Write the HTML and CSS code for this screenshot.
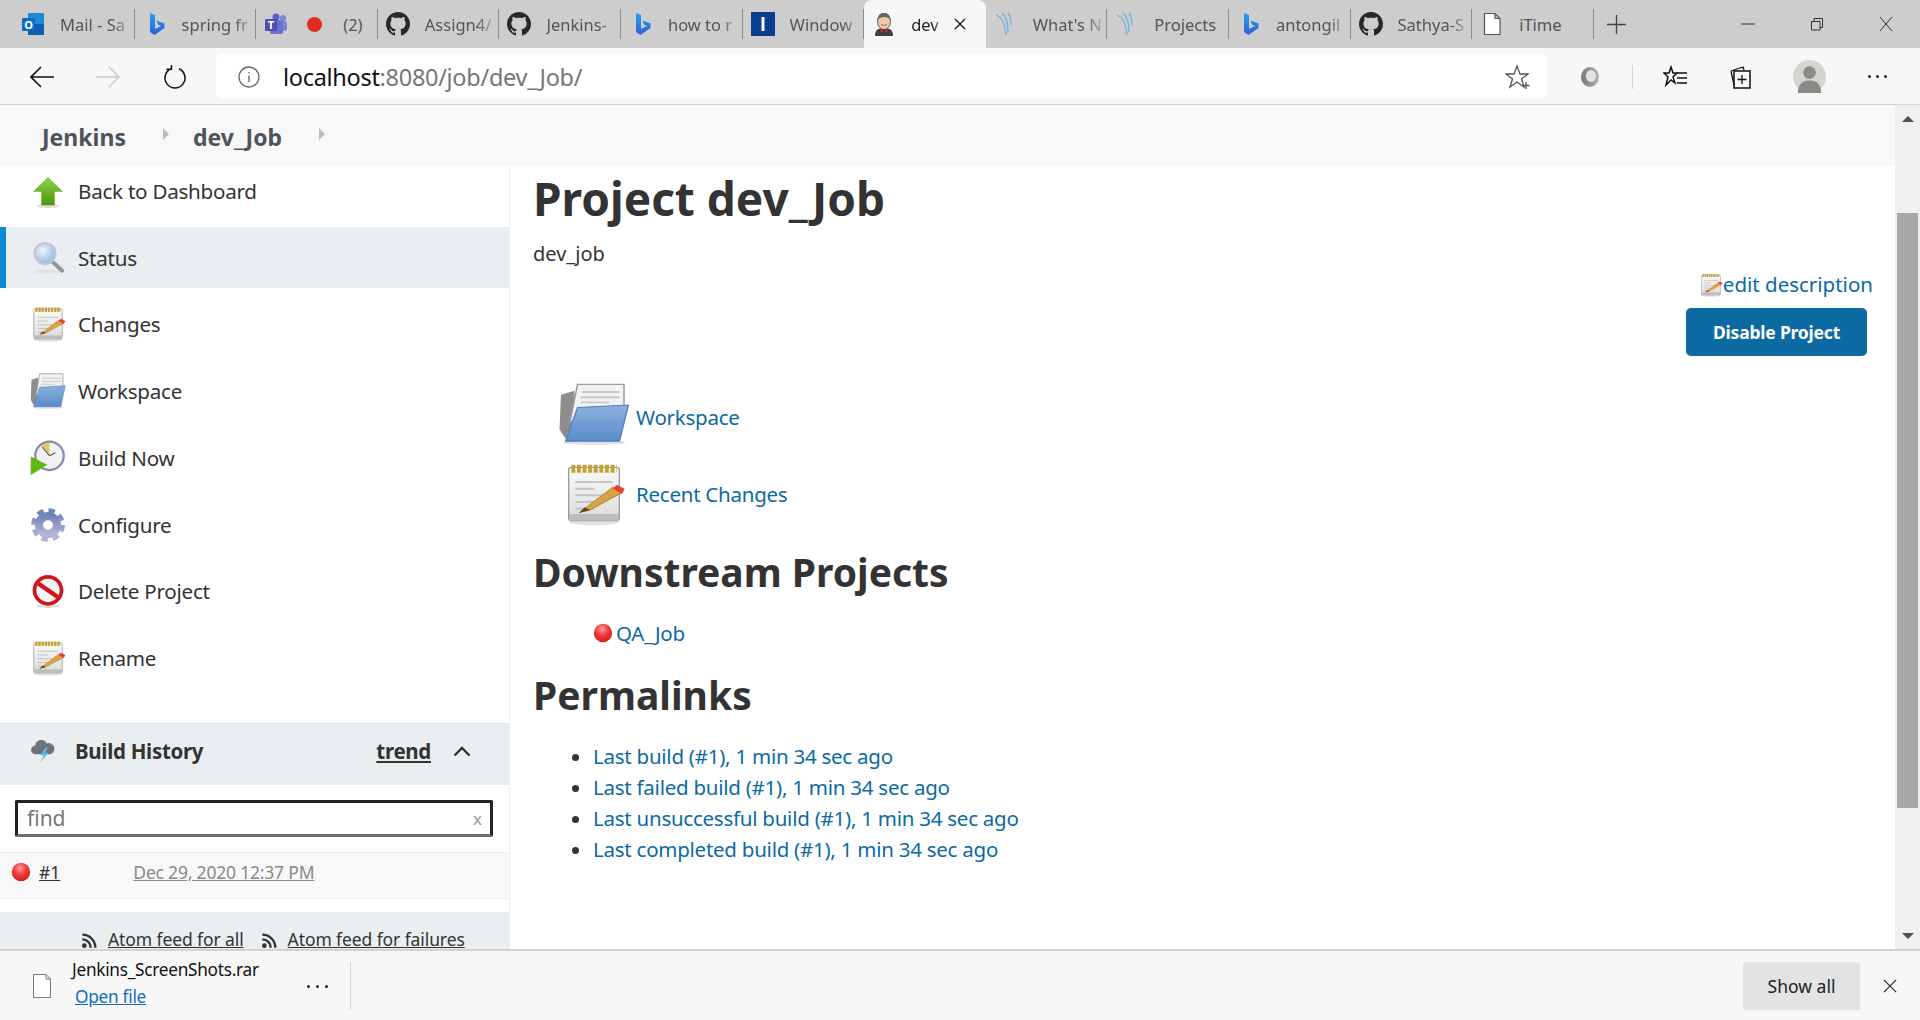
FILE: index.html
```html
<!doctype html>
<html>
<head>
<meta charset="utf-8">
<title>dev_Job [Jenkins]</title>
<link rel="stylesheet" href="styles.css">
</head>
<body>
<svg class="defs" width="0" height="0">
	<defs>
		<linearGradient id="g-green" x1="0" y1="0" x2="0" y2="1"><stop offset="0" stop-color="#8ed04a"/><stop offset="1" stop-color="#4e9a06"/></linearGradient>
		<linearGradient id="g-paper" x1="0" y1="0" x2="0" y2="1"><stop offset="0" stop-color="#fafafa"/><stop offset="1" stop-color="#dcdcdc"/></linearGradient>
		<linearGradient id="g-blue" x1="0" y1="0" x2="0" y2="1"><stop offset="0" stop-color="#8cb0de"/><stop offset="1" stop-color="#5a8ccb"/></linearGradient>
		<linearGradient id="g-gear" x1="0" y1="0" x2="0" y2="1"><stop offset="0" stop-color="#6f86b8"/><stop offset="1" stop-color="#b5b5d8"/></linearGradient>
		<linearGradient id="g-bing" x1="0" y1="0" x2="0" y2="1"><stop offset="0" stop-color="#2aa0f0"/><stop offset="1" stop-color="#2a5fd8"/></linearGradient>
		<linearGradient id="g-ring" x1="0" y1="0" x2="1" y2="0"><stop offset="0" stop-color="#777"/><stop offset="1" stop-color="#b5b5b5"/></linearGradient>
		<radialGradient id="g-lens" cx="0.4" cy="0.35" r="0.7"><stop offset="0" stop-color="#eef5ff"/><stop offset="1" stop-color="#8fb4e6"/></radialGradient>
		<radialGradient id="g-ball" cx="0.45" cy="0.3" r="0.7"><stop offset="0" stop-color="#ff9d9d"/><stop offset="0.5" stop-color="#f03a3a"/><stop offset="1" stop-color="#d81c1c"/></radialGradient>
		<symbol id="i-up" viewBox="0 0 48 48">
			<ellipse cx="24" cy="44" rx="16" ry="2.5" fill="#ddd"/>
			<polygon points="24,5 44,25 33,25 33,43 15,43 15,25 4,25" fill="url(#g-green)"/>
		</symbol>
		<symbol id="i-search" viewBox="0 0 48 48">
			<ellipse cx="22" cy="42" rx="18" ry="3" fill="#e3e3e3"/>
			<line x1="30" y1="29" x2="43" y2="41" stroke="#8f959c" stroke-width="5" stroke-linecap="round"/>
			<circle cx="20" cy="18" r="14" fill="url(#g-lens)" stroke="#c3c6cc" stroke-width="3"/>
		</symbol>
		<symbol id="i-notepad" viewBox="0 0 48 48">
			<ellipse cx="24" cy="45" rx="19" ry="2.5" fill="#e2e2e2"/>
			<rect x="5" y="4" width="38" height="40" rx="2" fill="url(#g-paper)" stroke="#9a9a9a"/>
			<rect x="5.500" y="39" width="37" height="5" fill="#bdbdbd"/>
			<line x1="7" y1="5" x2="41" y2="5" stroke="#c2a336" stroke-width="6" stroke-dasharray="3 1.200"/>
			<path d="M10 15H38M10 20H24M10 25H34M10 30H28M10 35H24" stroke="#c4c4c4" stroke-width="1.500"/>
			<polygon points="38,19 45,23 21,36 13,38" fill="#dca24a" stroke="#a9741a" stroke-width=".6"/>
			<polygon points="41,17 47,20 45,24 38,20" fill="#e2433c"/>
			<polygon points="17,34 21,36 13,38" fill="#5b4320"/>
		</symbol>
		<symbol id="i-folder" viewBox="0 0 48 48" preserveAspectRatio="none">
			<ellipse cx="24" cy="46" rx="21" ry="2" fill="#e2e2e2"/>
			<polygon points="2,9 11,6 11,40 5,43 1,36" fill="#8d8d8d"/>
			<polygon points="13,1 44,1 44,26 8,30" fill="#f2f2f2" stroke="#9c9c9c"/>
			<path d="M16 7H41M15 11H41M15 15H34" stroke="#c8c8c8" stroke-width="1.500"/>
			<polygon points="13,19 47,17 41,45 5,45" fill="url(#g-blue)" stroke="#4f7fbc" stroke-width=".8"/>
		</symbol>
		<symbol id="i-clock" viewBox="0 0 48 48">
			<circle cx="26" cy="21" r="19" fill="#f1f1f4" stroke="#8a8aa6" stroke-width="3"/>
			<path d="M26 21L16 7A18 18 0 0 1 26 4Z" fill="#e6c766"/>
			<path d="M26 21L16 9M26 21L34 17" stroke="#555" stroke-width="1.500"/>
			<polygon points="1,22 23,33 1,47" fill="#62b80e"/>
		</symbol>
		<symbol id="i-gear" viewBox="0 0 48 48">
			<circle cx="24" cy="24" r="18" fill="none" stroke="url(#g-gear)" stroke-width="9" stroke-dasharray="8 6.140"/>
			<circle cx="24" cy="24" r="12" fill="none" stroke="url(#g-gear)" stroke-width="11"/>
		</symbol>
		<symbol id="i-no" viewBox="0 0 48 48">
			<ellipse cx="24" cy="44" rx="16" ry="2.500" fill="#ddd"/>
			<circle cx="24" cy="23" r="18" fill="#f6f6f6" stroke="#d0161c" stroke-width="5"/>
			<line x1="11" y1="14" x2="37" y2="32" stroke="#d0161c" stroke-width="6"/>
		</symbol>
		<symbol id="i-storm" viewBox="0 0 48 48">
			<path d="M10 30a8 8 0 0 1 0-16 11 11 0 0 1 21-4 9 9 0 0 1 7 20z" fill="#6f7478"/>
			<polygon points="28,18 20,32 26,32 18,46 34,27 27,27 33,18" fill="#5cb8ee"/>
		</symbol>
		<symbol id="i-ball" viewBox="0 0 24 24">
			<circle cx="12" cy="12" r="11" fill="url(#g-ball)"/>
		</symbol>
		<symbol id="i-rss" viewBox="0 0 24 24">
			<circle cx="5" cy="19" r="3.500" fill="#333"/>
			<path d="M2 9.500A12.500 12.500 0 0 1 14.500 22M2 2.500A19.500 19.500 0 0 1 21.500 22" fill="none" stroke="#333" stroke-width="3.600"/>
		</symbol>
		<symbol id="i-github" viewBox="0 0 16 16">
			<path fill="#24292e" d="M8 0C3.58 0 0 3.58 0 8c0 3.54 2.29 6.53 5.47 7.59.4.07.55-.17.55-.38 0-.19-.01-.82-.01-1.49-2.01.37-2.53-.49-2.69-.94-.09-.23-.48-.94-.82-1.13-.28-.15-.68-.52-.01-.53.63-.01 1.08.58 1.23.82.72 1.21 1.87.87 2.33.66.07-.52.28-.87.51-1.07-1.78-.2-3.64-.89-3.64-3.95 0-.87.31-1.59.82-2.15-.08-.2-.36-1.02.08-2.12 0 0 .67-.21 2.2.82.64-.18 1.32-.27 2-.27.68 0 1.36.09 2 .27 1.53-1.04 2.2-.82 2.2-.82.44 1.1.16 1.92.08 2.12.51.56.82 1.27.82 2.15 0 3.07-1.87 3.75-3.65 3.95.29.25.54.73.54 1.48 0 1.07-.01 1.93-.01 2.2 0 .21.15.46.55.38A8.013 8.013 0 0016 8c0-4.42-3.58-8-8-8z"/>
		</symbol>
		<symbol id="i-bing" viewBox="0 0 24 24">
			<path d="M7 1l5 2v14l6-3-3-1.500-1.500-4 8 3V16l-10 7-4.500-3z" fill="url(#g-bing)"/>
		</symbol>
		<symbol id="i-swirl" viewBox="0 0 24 24">
			<path d="M2 3c6 2 9 9 10 20M8 1c4 3 6 10 6 19M14 1c2 3 3 6 3 12" fill="none" stroke="#6bb3e0" stroke-width="1.300"/>
		</symbol>
		<symbol id="i-page" viewBox="0 0 24 24">
			<path d="M4.500 1.500H15l5 5v16H4.500zM15 1.500v5h5" fill="#fff" stroke="#555" stroke-width="1.200"/>
		</symbol>
		<symbol id="i-jenkins" viewBox="0 0 24 24">
			<path d="M3 24c0-6 3-8 9-8s9 2 9 8z" fill="#3d3d4a"/>
			<path d="M8.500 17l3.500 2 3.500-2v4l-3.500-2-3.500 2z" fill="#c22"/>
			<ellipse cx="12" cy="9.500" rx="6.500" ry="8" fill="#eec9a8" stroke="#444" stroke-width=".8"/>
			<path d="M5.500 8C6 2 9 1 12 1s6 1 6.500 7C16 4 9 4 5.500 8z" fill="#6b6560"/>
			<path d="M9 12.500q3 2 6 0" fill="none" stroke="#844" stroke-width=".8"/>
		</symbol>
	</defs>
</svg>

<div class="tabstrip">
	<div class="tab">
		<svg class="tab-ico" viewBox="0 0 24 24"><rect x="7" y="1" width="16" height="22" rx="1" fill="#1b8ad8"/><rect x="7" y="12" width="16" height="11" fill="#0d5eb0"/><rect x="1" y="6" width="13" height="13" rx="1" fill="#0f6cc4"/><text x="7.500" y="16.500" class="ico-letter">O</text></svg>
		<span class="tab-title">Mail - Sa</span>
	</div>
	<div class="tab">
		<svg class="tab-ico"><use href="#i-bing"/></svg>
		<span class="tab-title">spring fr</span>
	</div>
	<div class="tab tab-teams">
		<svg class="tab-ico" viewBox="0 0 24 24"><circle cx="19" cy="6" r="3" fill="#7b83d4"/><circle cx="12" cy="5" r="3.500" fill="#5b60c4"/><rect x="14" y="9" width="9" height="10" rx="3" fill="#7b83d4"/><rect x="6" y="8" width="13" height="14" rx="2" fill="#6b70cc"/><rect x="1" y="7" width="12" height="12" rx="1" fill="#4b50b0"/><text x="7" y="16.500" class="ico-letter">T</text></svg>
		<span class="rec-dot"></span>
		<span class="tab-title tab-title-full">(2)</span>
	</div>
	<div class="tab">
		<svg class="tab-ico"><use href="#i-github"/></svg>
		<span class="tab-title">Assign4/</span>
	</div>
	<div class="tab">
		<svg class="tab-ico"><use href="#i-github"/></svg>
		<span class="tab-title">Jenkins-</span>
	</div>
	<div class="tab">
		<svg class="tab-ico"><use href="#i-bing"/></svg>
		<span class="tab-title">how to r</span>
	</div>
	<div class="tab">
		<svg class="tab-ico" viewBox="0 0 24 24"><rect width="24" height="24" fill="#0b3d91"/><rect x="10.500" y="5" width="3" height="14" fill="#fff"/></svg>
		<span class="tab-title">Window</span>
	</div>
	<div class="tab tab-active">
		<svg class="tab-ico"><use href="#i-jenkins"/></svg>
		<span class="tab-title">dev</span>
		<svg class="tab-close" viewBox="0 0 12 12"><path d="M1 1L11 11M11 1L1 11" stroke="#111" stroke-width="1.300"/></svg>
	</div>
	<div class="tab">
		<svg class="tab-ico"><use href="#i-swirl"/></svg>
		<span class="tab-title">What's N</span>
	</div>
	<div class="tab">
		<svg class="tab-ico"><use href="#i-swirl"/></svg>
		<span class="tab-title tab-title-full">Projects</span>
	</div>
	<div class="tab">
		<svg class="tab-ico"><use href="#i-bing"/></svg>
		<span class="tab-title">antongil</span>
	</div>
	<div class="tab">
		<svg class="tab-ico"><use href="#i-github"/></svg>
		<span class="tab-title">Sathya-S</span>
	</div>
	<div class="tab">
		<svg class="tab-ico"><use href="#i-page"/></svg>
		<span class="tab-title tab-title-full">iTime</span>
	</div>
	<svg class="new-tab" viewBox="0 0 20 20"><path d="M10 0V20M0 10H20" stroke="#444" stroke-width="1.400"/></svg>
	<div class="win-btns">
		<svg viewBox="0 0 14 14"><path d="M0 7H14" stroke="#333"/></svg>
		<svg viewBox="0 0 14 14"><path d="M1.500 4.500H10V13H1.500zM4 4.500V1.500H12.500V10.500H10" fill="none" stroke="#333"/></svg>
		<svg viewBox="0 0 14 14"><path d="M1 0L13 14M13 0L1 14" stroke="#333"/></svg>
	</div>
</div>

<div class="toolbar">
	<svg class="tb-ico tb-back" viewBox="0 0 24 24"><path d="M24 12H1M11 2L1 12L11 22" fill="none" stroke="#111" stroke-width="1.600"/></svg>
	<svg class="tb-ico tb-fwd" viewBox="0 0 24 24"><path d="M0 12H23M13 2L23 12L13 22" fill="none" stroke="#ccc" stroke-width="1.600"/></svg>
	<svg class="tb-ico tb-reload" viewBox="0 0 24 24"><path d="M8 3.800A10 10 0 1 0 16 3.800M8.500 0V4.300H3.500" fill="none" stroke="#111" stroke-width="1.500"/></svg>
	<div class="addr">
		<svg class="addr-info" viewBox="0 0 22 22"><circle cx="11" cy="11" r="10" fill="none" stroke="#666" stroke-width="1.300"/><path d="M11 9.500V16M11 6V7.500" stroke="#666" stroke-width="1.400"/></svg>
		<span class="addr-url"><b>localhost</b>:8080/job/dev_Job/</span>
		<svg class="addr-star" viewBox="0 0 26 26"><path d="M12 2l3 8h8l-6.500 5 2.500 8-7-5-7 5 2.500-8L1 10h8z" fill="none" stroke="#555" stroke-width="1.300"/><path d="M21 18V25M17.500 21.500H24.500" stroke="#555" stroke-width="1.300"/></svg>
	</div>
	<svg class="ext-ring" viewBox="0 0 20 22"><ellipse cx="10" cy="11" rx="9" ry="10" fill="url(#g-ring)"/><ellipse cx="11" cy="10" rx="5" ry="6" fill="#e4e4e4"/></svg>
	<span class="tb-sep"></span>
	<svg class="tb-ico tb-favs" viewBox="0 0 24 24"><path d="M8 2l2 6h4l-4 4 2 6-4-3-5 5 2-8-4-4h5z" fill="none" stroke="#111" stroke-width="1.500"/><path d="M14 8H24M14 13H24M14 18H24" stroke="#111" stroke-width="1.500"/></svg>
	<svg class="tb-ico tb-coll" viewBox="0 0 24 24"><path d="M3 6L15 2L16 5M3 6L6 20" fill="none" stroke="#111" stroke-width="1.300"/><rect x="6" y="6" width="16" height="17" fill="none" stroke="#111" stroke-width="1.500"/><path d="M14 10V19M9.500 14.500H18.500" stroke="#111" stroke-width="1.300"/></svg>
	<svg class="tb-avatar" viewBox="0 0 34 34"><circle cx="17" cy="17" r="17" fill="#d4d4d0"/><circle cx="17" cy="13" r="6.500" fill="#8a8a86"/><path d="M5 34c0-11 6-13 12-13s12 2 12 13z" fill="#8a8a86"/></svg>
	<div class="tb-more"><i></i><i></i><i></i></div>
</div>

<div class="viewport">
	<div class="page">
		<div class="breadcrumb">
			<span class="crumb">Jenkins</span>
			<span class="crumb-arrow"></span>
			<span class="crumb">dev_Job</span>
			<span class="crumb-arrow"></span>
		</div>
		<div class="content">
			<div class="side">
				<div class="task task-first"><svg class="task-ico"><use href="#i-up"/></svg>Back to Dashboard</div>
				<div class="task task-active"><svg class="task-ico"><use href="#i-search"/></svg>Status</div>
				<div class="task"><svg class="task-ico"><use href="#i-notepad"/></svg>Changes</div>
				<div class="task"><svg class="task-ico"><use href="#i-folder"/></svg>Workspace</div>
				<div class="task"><svg class="task-ico"><use href="#i-clock"/></svg>Build Now</div>
				<div class="task"><svg class="task-ico"><use href="#i-gear"/></svg>Configure</div>
				<div class="task"><svg class="task-ico"><use href="#i-no"/></svg>Delete Project</div>
				<div class="task"><svg class="task-ico"><use href="#i-notepad"/></svg>Rename</div>

				<div class="pane-head">
					<svg class="pane-ico"><use href="#i-storm"/></svg>
					<span class="pane-title">Build History</span>
					<span class="pane-trend">trend</span>
					<svg class="pane-chev" viewBox="0 0 18 11"><path d="M1.500 9.500L9 2L16.500 9.500" fill="none" stroke="#333" stroke-width="2.400"/></svg>
				</div>
				<div class="find-box">
					<span class="find-text">find</span>
					<span class="find-x">x</span>
				</div>
				<div class="build-row">
					<svg class="build-ball"><use href="#i-ball"/></svg>
					<a class="build-num">#1</a>
					<a class="build-date">Dec 29, 2020 12:37 PM</a>
				</div>
				<div class="feeds">
					<svg class="feed-ico"><use href="#i-rss"/></svg><a>Atom feed for all</a>
					<svg class="feed-ico feed-ico2"><use href="#i-rss"/></svg><a>Atom feed for failures</a>
				</div>
			</div>

			<div class="main">
				<h1>Project dev_Job</h1>
				<div class="desc">dev_job</div>
				<div class="edit-desc">
					<svg class="edit-ico"><use href="#i-notepad"/></svg><a>edit description</a>
				</div>
				<div class="disable-wrap"><button class="disable-btn">Disable Project</button></div>
				<div class="link-row link-row-first"><span class="link-ico"><svg class="ico-folder"><use href="#i-folder"/></svg></span><a>Workspace</a></div>
				<div class="link-row"><span class="link-ico"><svg class="ico-notes"><use href="#i-notepad"/></svg></span><a>Recent Changes</a></div>
				<h2>Downstream Projects</h2>
				<div class="downstream"><svg class="down-ball"><use href="#i-ball"/></svg><a>QA_Job</a></div>
				<h2 class="h2-perma">Permalinks</h2>
				<ul class="permalinks">
					<li><a>Last build (#1), 1 min 34 sec ago</a></li>
					<li><a>Last failed build (#1), 1 min 34 sec ago</a></li>
					<li><a>Last unsuccessful build (#1), 1 min 34 sec ago</a></li>
					<li><a>Last completed build (#1), 1 min 34 sec ago</a></li>
				</ul>
			</div>
		</div>
	</div>
	<div class="scrollbar">
		<span class="sb-up"></span>
		<span class="sb-thumb"></span>
		<span class="sb-down"></span>
	</div>
</div>

<div class="downloads">
	<svg class="dl-file" viewBox="0 0 18 24"><path d="M.5 .5H13L17.500 5V23.500H.5zM13 .5V5H17.500" fill="#fff" stroke="#777"/></svg>
	<div class="dl-info">
		<div class="dl-name">Jenkins_ScreenShots.rar</div>
		<a class="dl-open">Open file</a>
	</div>
	<div class="dl-more"><i></i><i></i><i></i></div>
	<span class="dl-sep"></span>
	<span class="dl-all">Show all</span>
	<svg class="dl-close" viewBox="0 0 16 16"><path d="M1 1L15 15M15 1L1 15" stroke="#222" stroke-width="1.300"/></svg>
</div>
</body>
</html>
```

FILE: styles.css
```css
*{
	box-sizing: border-box;
}
html,body{
	margin: 0;
	height: 100%;
}
body{
	display: flex;
	flex-direction: column;
	overflow: hidden;
	font-family: "Noto Sans", "Open Sans", sans-serif;
	color: #333;
	background: #fff;
}
a{
	color: #0b6aa2;
}
.defs{
	position: absolute;
}

/* tabs */
.tabstrip{
	height: 48px;
	flex: none;
	display: flex;
	align-items: stretch;
	padding-left: 13px;
	background: #cdcdcd;
}
.tab{
	width: 121.6px;
	flex: none;
	display: flex;
	align-items: center;
	padding-left: 8px;
	position: relative;
	font-size: 16.5px;
	color: #555;
	overflow: hidden;
}
.tab::after{
	content: "";
	position: absolute;
	right: 0;
	top: 9px;
	bottom: 9px;
	width: 1px;
	background: #8a8a8a;
}
.tab-ico{
	width: 24px;
	height: 24px;
	flex: none;
	margin-right: 15px;
}
.ico-letter{
	font-family: "Noto Sans", sans-serif;
	font-size: 11px;
	font-weight: 700;
	fill: #fff;
	text-anchor: middle;
}
.tab-title{
	flex: 1;
	min-width: 0;
	overflow: hidden;
	white-space: nowrap;
	-webkit-mask-image: linear-gradient(to right, #000 70%, transparent 100%);
	mask-image: linear-gradient(to right, #000 70%, transparent 100%);
}
.tab-title-full{
	-webkit-mask-image: none;
	mask-image: none;
}
.tab-teams .tab-ico{
	margin-right: 19px;
}
.rec-dot{
	width: 15px;
	height: 15px;
	flex: none;
	margin-right: 21px;
	border-radius: 50%;
	background: #e02b20;
}
.tab-active{
	background: #f7f7f7;
	border-radius: 8px 8px 0 0;
	color: #222;
}
.tab-active::after{
	display: none;
}
.tab-close{
	width: 12px;
	height: 12px;
	flex: none;
	margin: 0 20px 0 10px;
}
.new-tab{
	width: 19px;
	height: 19px;
	align-self: center;
	margin-left: 13px;
}
.win-btns{
	margin-left: auto;
	display: flex;
	align-items: center;
	gap: 55px;
	padding-right: 27px;
}
.win-btns svg{
	width: 14px;
	height: 14px;
}

/* toolbar */
.toolbar{
	height: 57px;
	flex: none;
	display: flex;
	align-items: center;
	padding: 1px 0 0 30px;
	background: #f7f7f7;
	border-bottom: 1px solid #d2d2d2;
}
.tb-ico{
	width: 24px;
	height: 24px;
	flex: none;
}
.tb-fwd{
	margin-left: 42px;
}
.tb-reload{
	margin-left: 43px;
}
.addr{
	width: 1331px;
	height: 45px;
	flex: none;
	margin-left: 29px;
	display: flex;
	align-items: center;
	padding: 0 16px 0 22px;
	background: #fff;
	border-radius: 6px;
}
.addr-info{
	width: 22px;
	height: 22px;
	flex: none;
}
.addr-url{
	margin-left: 23px;
	font-size: 23.5px;
	letter-spacing: -.3px;
	color: #767676;
}
.addr-url b{
	font-weight: 400;
	color: #111;
}
.addr-star{
	width: 26px;
	height: 26px;
	margin-left: auto;
}
.ext-ring{
	width: 20px;
	height: 22px;
	flex: none;
	margin-left: 33px;
}
.tb-sep{
	width: 1px;
	height: 24px;
	flex: none;
	margin-left: 32px;
	background: #d4d4d4;
}
.tb-favs{
	margin-left: 30px;
}
.tb-coll{
	margin-left: 41px;
}
.tb-avatar{
	width: 33px;
	height: 33px;
	flex: none;
	margin-left: 41px;
}
.tb-more{
	display: flex;
	gap: 5px;
	margin-left: 42px;
}
.tb-more i,.dl-more i{
	width: 3px;
	height: 3px;
	border-radius: 50%;
	background: #222;
}

/* page */
.viewport{
	flex: 1;
	min-height: 0;
	display: flex;
}
.page{
	flex: 1;
	min-width: 0;
	display: flex;
	flex-direction: column;
	overflow: hidden;
}
.breadcrumb{
	height: 61px;
	flex: none;
	display: flex;
	align-items: center;
	padding: 2px 0 0 42px;
	background: #f8f8f8;
}
.crumb{
	font-size: 23px;
	font-weight: 700;
	color: #4d545d;
}
.crumb-arrow{
	width: 0;
	height: 0;
	margin: -6px 0 0 37px;
	border-left: 6px solid #bbb;
	border-top: 6px solid transparent;
	border-bottom: 6px solid transparent;
}
.crumb-arrow + .crumb{
	margin-left: 24px;
}
.content{
	flex: 1;
	min-height: 0;
	display: flex;
}
.side{
	width: 510px;
	flex: none;
	border-right: 1px solid #f0f0f0;
	overflow: hidden;
}
.task{
	height: 61px;
	margin-bottom: 5.8px;
	display: flex;
	align-items: center;
	gap: 12px;
	padding-left: 30px;
	font-size: 20.6px;
	letter-spacing: -.25px;
}
.task-first{
	height: 50px;
	margin-bottom: 11px;
}
.task-active{
	background: #e9eef1;
	border-left: 6px solid #0b8ad6;
	padding-left: 24px;
}
.task-ico{
	width: 36px;
	height: 36px;
	flex: none;
}
.pane-head{
	height: 62px;
	margin-top: 34px;
	display: flex;
	align-items: center;
	padding: 0 0 6px 30px;
	background: #e9eef1;
	border-top: 1px solid #dde3e7;
}
.pane-ico{
	width: 26px;
	height: 26px;
	flex: none;
}
.pane-title{
	margin-left: 19px;
	font-size: 20.5px;
	font-weight: 700;
	letter-spacing: -.3px;
}
.pane-trend{
	margin-left: auto;
	font-size: 20.5px;
	font-weight: 700;
	letter-spacing: -.3px;
	text-decoration: underline;
}
.pane-chev{
	width: 18px;
	height: 11px;
	flex: none;
	margin: 0 38px 0 22px;
}
.find-box{
	height: 37px;
	margin: 15px 16px 15px 15px;
	display: flex;
	align-items: center;
	justify-content: space-between;
	padding: 0 8px 0 9px;
	border: 3px solid #222;
	border-bottom-color: #6d6d6d;
	border-radius: 2px;
}
.find-text{
	font-size: 21px;
	color: #777;
}
.find-x{
	font-size: 17px;
	color: #999;
}
.build-row{
	height: 47px;
	margin-right: 1px;
	display: flex;
	align-items: center;
	padding: 0 0 6px 11px;
	background: #f8f8f8;
	border-top: 1px solid #ececec;
	border-bottom: 1px solid #ececec;
	font-size: 17.5px;
}
.build-row a{
	text-decoration: underline;
}
.build-ball{
	width: 20px;
	height: 20px;
	flex: none;
}
.build-num{
	margin-left: 8px;
	color: #333;
}
.build-date{
	margin-left: 73px;
	color: #888;
	letter-spacing: -.2px;
}
.feeds{
	height: 37px;
	margin-top: 13px;
	display: flex;
	align-items: flex-start;
	padding: 17px 0 0 81px;
	background: #e9eef1;
	font-size: 17.5px;
	line-height: 20px;
	white-space: nowrap;
	letter-spacing: -.1px;
	overflow: hidden;
}
.feeds a{
	color: #333;
	text-decoration: underline;
}
.feed-ico{
	width: 16px;
	height: 16px;
	flex: none;
	margin: 4px 11px 0 0;
}
.feed-ico2{
	margin-left: 17px;
}

/* main column */
.main{
	flex: 1;
	min-width: 0;
	padding: 0 22px 0 23px;
	font-size: 20.5px;
}
.main a{
	letter-spacing: -.25px;
}
h1{
	margin: 5px 0 0;
	font-size: 46px;
	line-height: 54px;
	font-weight: 700;
}
.desc{
	margin-top: 15px;
	font-size: 20px;
	line-height: 27px;
}
.edit-desc{
	margin-top: 4px;
	display: flex;
	justify-content: flex-end;
	align-items: center;
	line-height: 27px;
}
.edit-desc a{
	letter-spacing: 0;
}
.edit-ico{
	width: 24px;
	height: 24px;
	flex: none;
}
.disable-wrap{
	margin-top: 10px;
	display: flex;
	justify-content: flex-end;
	padding-right: 6px;
}
.disable-btn{
	width: 181px;
	height: 48px;
	border: 0;
	border-radius: 5px;
	background: #0b6aa2;
	color: #fff;
	font-family: inherit;
	font-size: 17.5px;
	font-weight: 700;
	letter-spacing: -.2px;
}
.link-row{
	height: 64px;
	margin-top: 15px;
	display: flex;
	align-items: center;
	gap: 6px;
	padding-left: 25px;
}
.link-row-first{
	margin-top: 27px;
}
.link-row-first a{
	padding-top: 4px;
}
.link-ico{
	width: 72px;
	height: 64px;
	flex: none;
	display: flex;
	justify-content: center;
}
.ico-folder{
	width: 72px;
	height: 62px;
}
.ico-notes{
	width: 64px;
	height: 64px;
}
h2{
	margin: 22px 0 0;
	font-size: 39px;
	line-height: 48px;
	font-weight: 700;
}
.h2-perma{
	margin-top: 24px;
}
.downstream{
	margin-top: 23px;
	display: flex;
	align-items: center;
	gap: 3px;
	padding-left: 60px;
	line-height: 28px;
}
.down-ball{
	width: 20px;
	height: 20px;
	flex: none;
}
.permalinks{
	margin: 22px 0 0;
	padding-left: 60px;
}
.permalinks li{
	line-height: 31px;
}

/* scrollbar */
.scrollbar{
	width: 25px;
	flex: none;
	display: flex;
	flex-direction: column;
	align-items: center;
	background: #f0f0f0;
}
.sb-up,.sb-down{
	width: 0;
	height: 0;
	border-left: 6px solid transparent;
	border-right: 6px solid transparent;
}
.sb-up{
	margin-top: 11px;
	border-bottom: 6px solid #505050;
}
.sb-thumb{
	width: 21px;
	height: 595px;
	margin-top: 91px;
	background: #a8a8a8;
}
.sb-down{
	margin-top: 125px;
	border-top: 6px solid #505050;
}

/* download bar */
.downloads{
	height: 71px;
	flex: none;
	display: flex;
	align-items: center;
	padding-left: 33px;
	background: #f7f7f7;
	border-top: 2px solid #d2d2d2;
}
.dl-file{
	width: 18px;
	height: 24px;
	flex: none;
}
.dl-info{
	width: 235px;
	margin: -5px 0 0 21px;
	font-size: 17.2px;
	line-height: 27px;
	letter-spacing: -.25px;
}
.dl-name{
	color: #111;
}
.dl-open{
	margin-left: 3px;
	color: #0f6cbd;
	text-decoration: underline;
}
.dl-more{
	display: flex;
	gap: 6px;
	margin-top: 1px;
}
.dl-sep{
	width: 1px;
	height: 48px;
	flex: none;
	margin-left: 22px;
	background: #d4d4d4;
}
.dl-all{
	width: 117px;
	height: 48px;
	margin-left: auto;
	display: flex;
	align-items: center;
	justify-content: center;
	border-radius: 2px;
	background: #e3e3e3;
	color: #222;
	font-size: 17.5px;
}
.dl-close{
	width: 14px;
	height: 14px;
	flex: none;
	margin: 0 23px 0 23px;
}
```
